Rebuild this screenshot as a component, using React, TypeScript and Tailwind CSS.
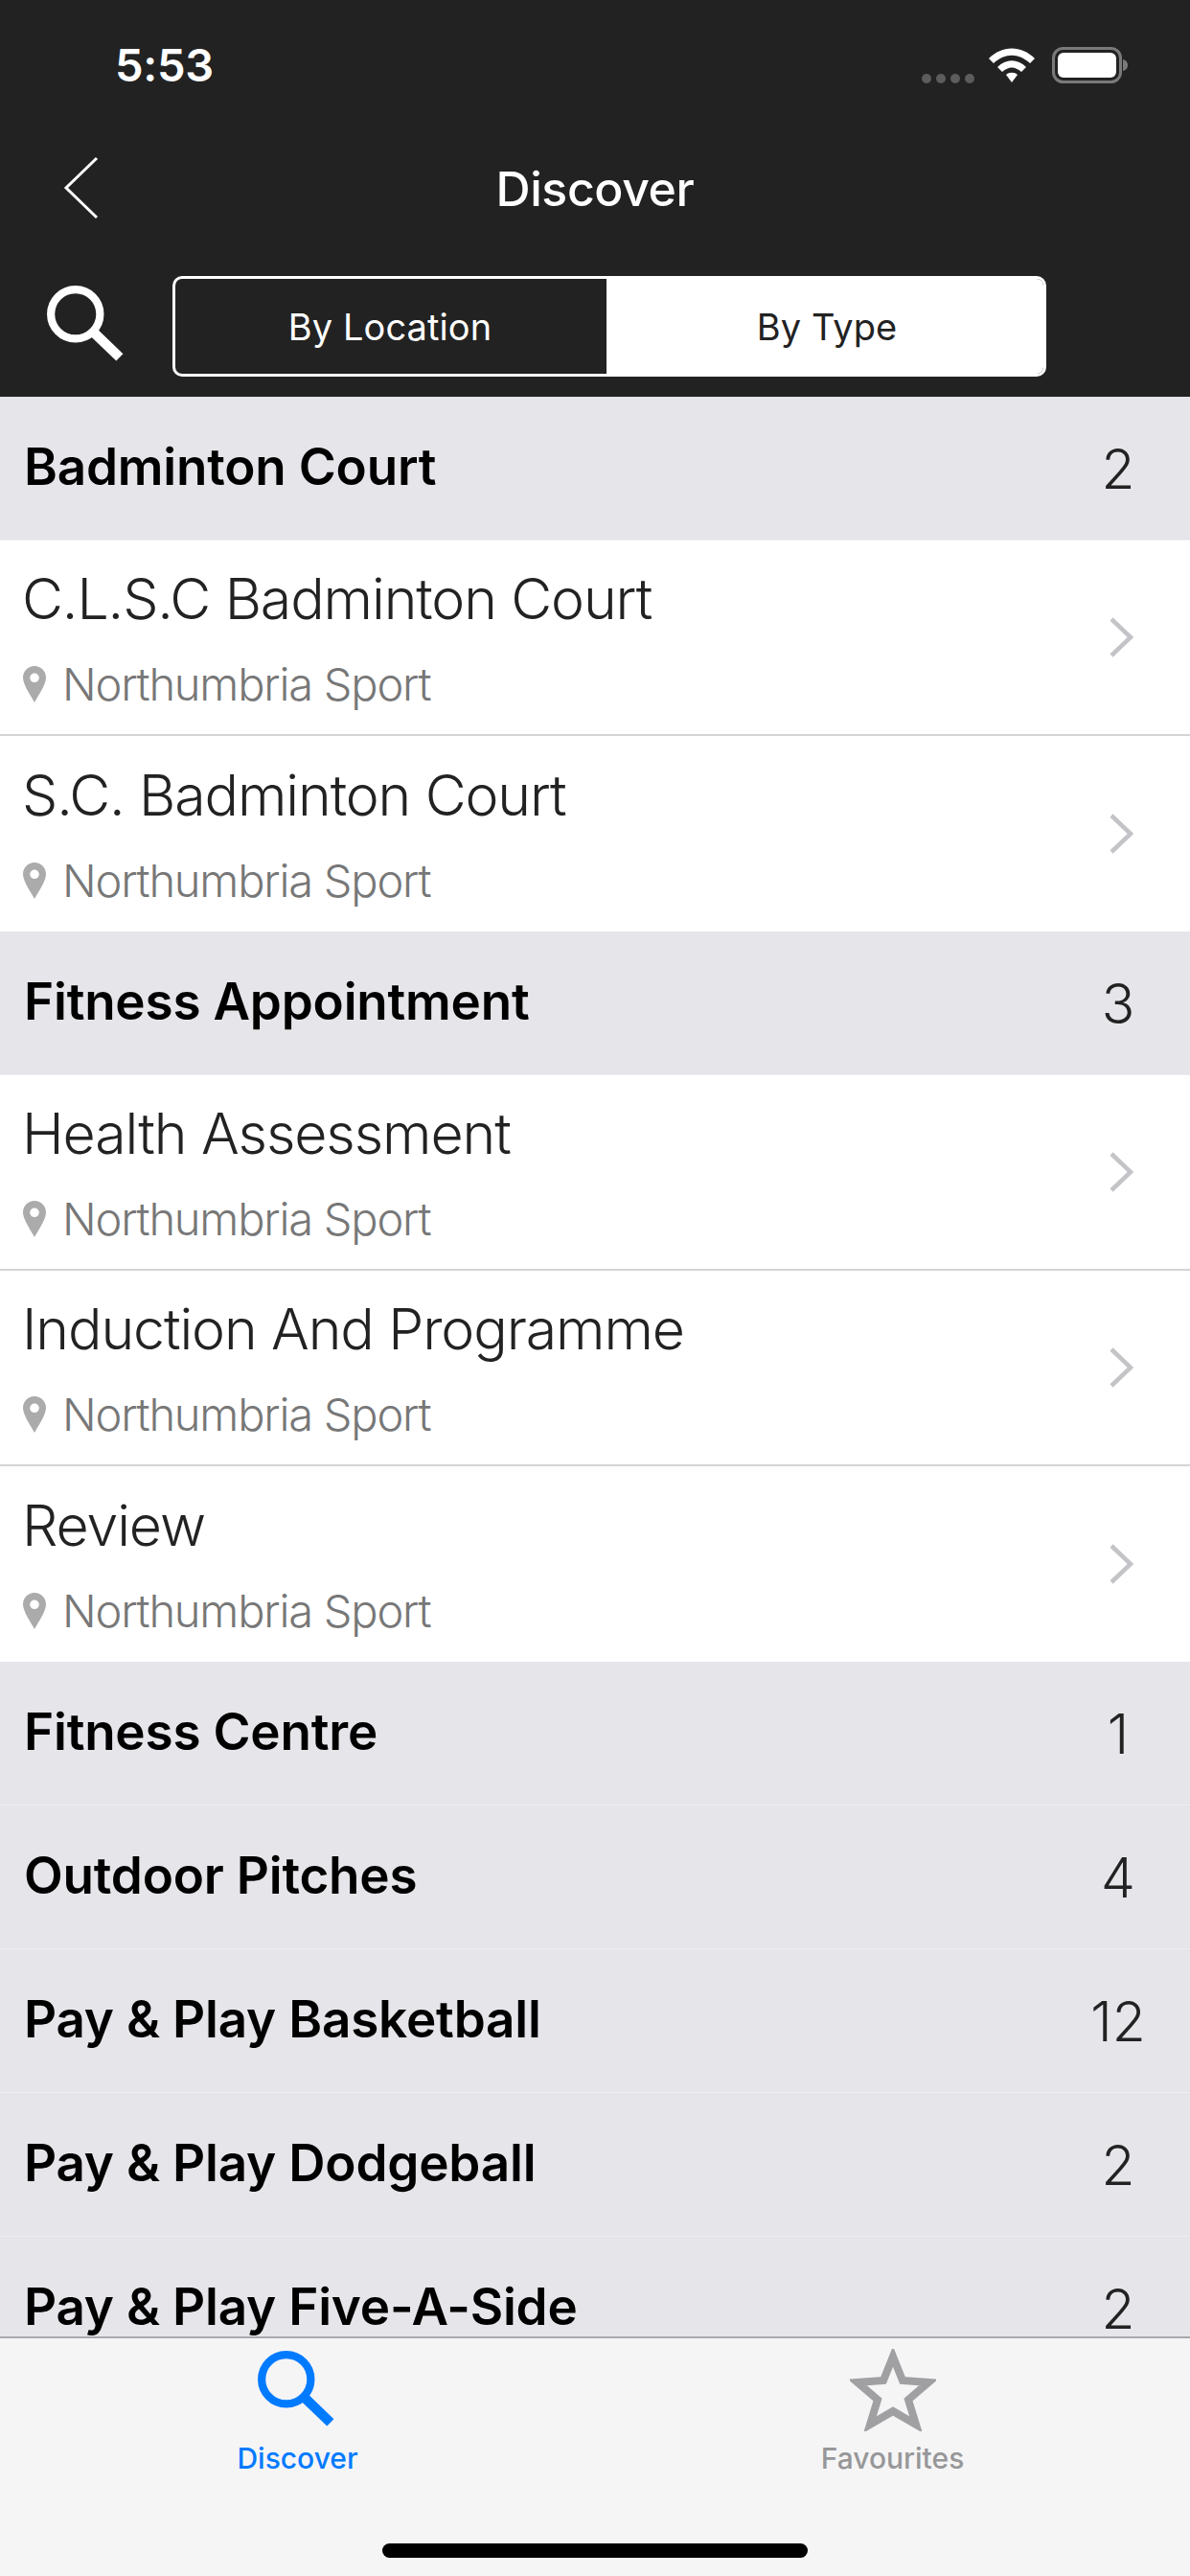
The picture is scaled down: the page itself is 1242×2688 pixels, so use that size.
const sans = "font-['Inter',sans-serif]";

function SearchIcon({ color, className }: { color: string; className: string }) {
  return (
    <svg viewBox="0 0 80 78" className={className} fill="none">
      <circle cx="30" cy="29" r="25" stroke={color} strokeWidth="8" />
      <path d="M49 48 L75 73" stroke={color} strokeWidth="10" />
    </svg>
  );
}

function Chevron() {
  return (
    <svg viewBox="0 0 30 44" className="w-[30px] h-[44px] shrink-0 mr-[56px]" fill="none">
      <path d="M4 3 L24 22 L4 41" stroke="#c4c4c8" strokeWidth="4.5" />
    </svg>
  );
}

function Pin() {
  return (
    <svg viewBox="0 0 24 38" className="w-[24px] h-[38px] shrink-0 ml-[1px]">
      <path fillRule="evenodd" fill="#ababab" d="M12 0C5.400 0 0 5.300 0 12c0 8 9 20 12 26 3-6 12-18 12-26C24 5.300 18.600 0 12 0zm0 7.500a4.800 4.800 0 1 1 0 9.600 4.800 4.800 0 0 1 0-9.600z" />
    </svg>
  );
}

function Section({ title, count }: { title: string; count: number }) {
  return (
    <div className="h-[150px] shrink-0 bg-[#e5e5ea] border-b border-[#eeeef1] flex items-center pl-[25px]">
      <span className="flex-1 text-[53px] font-semibold leading-[60px] tracking-[-0.2px] text-black mt-[-4px]">{title}</span>
      <span className="w-[100px] mr-[25px] mt-[2px] text-center text-[57px] font-light leading-[50px] text-[#222]">{count}</span>
    </div>
  );
}

function Row({ title, last }: { title: string; last?: boolean }) {
  return (
    <div className={`h-[204px] shrink-0 bg-white flex items-center pl-[23px] ${last ? "" : "border-b-2 border-[#d4d4d6]"}`}>
      <div className="flex-1 flex flex-col gap-[28px]">
        <div className="text-[59px] font-light leading-[70px] tracking-[-1.1px] text-[#222]">{title}</div>
        <div className="flex items-center gap-[17px] h-[52px]">
          <Pin />
          <span className="text-[47px] font-light leading-[52px] tracking-[-1.2px] text-[#777]">Northumbria Sport</span>
        </div>
      </div>
      <Chevron />
    </div>
  );
}

export default function App() {
  return (
    <div className={`${sans} w-[1242px] h-[2688px] flex flex-col bg-white overflow-hidden`}>
      <header className="h-[414px] shrink-0 bg-[#222222] flex flex-col text-white">
        <div className="h-[134px] flex items-center pl-[120px] pr-[64px] pt-[2px]">
          <span className="flex-1 text-[47px] font-semibold leading-[56px] tracking-[-0.3px]">5:53</span>
          <div className="flex items-end gap-[5px] pb-[1px] mr-[15px] self-center h-[38px] mt-[2px]">
            {[0, 1, 2, 3].map((i) => (
              <span key={i} className="w-[10px] h-[10px] rounded-full bg-[#5c5c5c]" />
            ))}
          </div>
          <svg viewBox="0 0 48 36" className="w-[48px] h-[36px] mr-[18px]" fill="#ffffff">
            <path d="M0 11 C14 -3 34 -3 48 11 L43 16 C31 5 17 5 5 16Z" />
            <path d="M9 20 C18 11 30 11 39 20 L34 25 C27 19 21 19 14 25Z" />
            <path d="M18 28 C21 25 27 25 30 28 L24 36Z" />
          </svg>
          <svg viewBox="0 0 80 38" className="w-[80px] h-[38px]">
            <rect x="1.500" y="1.500" width="70" height="35" rx="10" fill="none" stroke="#7a7a7a" strokeWidth="3" />
            <rect x="6" y="6" width="61" height="26" rx="6" fill="#ffffff" />
            <path d="M74 13 C78 14 79 17 79 19 C79 21 78 24 74 25Z" fill="#7a7a7a" />
          </svg>
        </div>
        <div className="h-[128px] relative flex items-center justify-center">
          <svg viewBox="0 0 38 66" className="absolute left-[66px] top-[29px] w-[38px] h-[66px]" fill="none">
            <path d="M35 2 L3 33 L35 64" stroke="#ffffff" strokeWidth="3" />
          </svg>
          <span className="text-[50px] font-medium leading-[60px] tracking-[-0.4px] mt-[-2px]">Discover</span>
        </div>
        <div className="flex items-start pl-[48px] pt-[26px]">
          <SearchIcon color="#ffffff" className="w-[82px] h-[80px] mt-[10px] mr-[50px]" />
          <div className="w-[912px] h-[105px] rounded-[10px] border-[3px] border-white flex overflow-hidden">
            <div className="w-[450px] flex items-center justify-center pr-[2px] text-[38px] leading-[46px] tracking-[0.1px] text-white">By Location</div>
            <div className="flex-1 bg-white flex items-center justify-center pl-[4px] text-[38px] leading-[46px] tracking-[0.1px] text-[#222]">By Type</div>
          </div>
        </div>
      </header>

      <main className="flex-1 min-h-0 overflow-hidden flex flex-col">
        <Section title="Badminton Court" count={2} />
        <Row title="C.L.S.C Badminton Court" />
        <Row title="S.C. Badminton Court" last />
        <Section title="Fitness Appointment" count={3} />
        <Row title="Health Assessment" />
        <Row title="Induction And Programme" />
        <Row title="Review" last />
        <Section title="Fitness Centre" count={1} />
        <Section title="Outdoor Pitches" count={4} />
        <Section title="Pay & Play Basketball" count={12} />
        <Section title="Pay & Play Dodgeball" count={2} />
        <Section title="Pay & Play Five-A-Side" count={2} />
      </main>

      <nav className="h-[250px] shrink-0 bg-[#f5f5f6] border-t-2 border-[#a9a9ac] flex flex-col">
        <div className="flex">
          <div className="w-[621px] flex flex-col items-center pt-[13px]">
            <SearchIcon color="#007aff" className="w-[82px] h-[80px] ml-[-4px]" />
            <span className="mt-[14px] text-[30px] font-medium leading-[36px] text-[#007aff]">Discover</span>
          </div>
          <div className="w-[621px] flex flex-col items-center pt-[11px]">
            <svg viewBox="0 0 90 86" className="w-[90px] h-[86px]" fill="none">
              <path d="M45 8 L55 33 L82 35 L61 53 L69 79 L45 65 L21 79 L29 53 L8 35 L35 33Z" stroke="#a0a0a2" strokeWidth="8" />
            </svg>
            <span className="mt-[10px] text-[30px] font-medium leading-[36px] text-[#979799]">Favourites</span>
          </div>
        </div>
        <div className="mt-[71px] self-center w-[444px] h-[15px] rounded-full bg-black" />
      </nav>
    </div>
  );
}
